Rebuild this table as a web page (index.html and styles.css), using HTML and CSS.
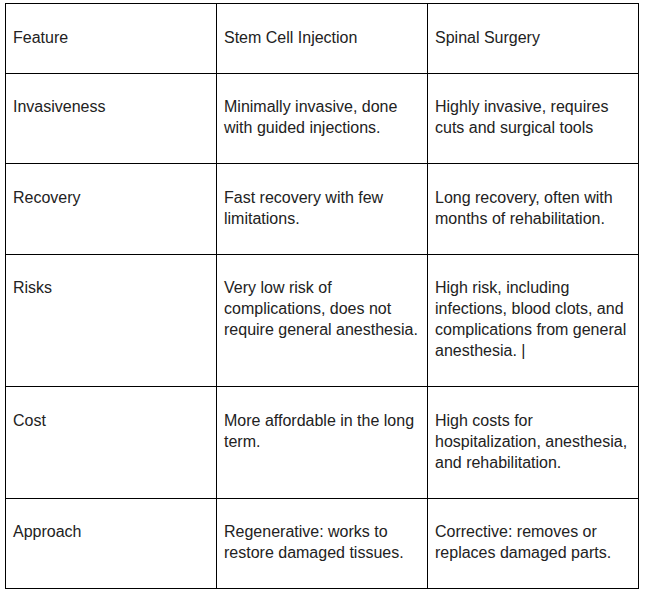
FILE: index.html
```html
<!DOCTYPE html>
<html>
<head>
<meta charset="utf-8">
<link rel="stylesheet" href="styles.css">
</head>
<body>
<table class="compare">
<colgroup><col class="c"><col class="c"><col class="c"></colgroup>
<tr><td>Feature</td><td>Stem Cell Injection</td><td>Spinal Surgery</td></tr>
<tr><td>Invasiveness</td><td>Minimally invasive, done with guided injections.</td><td>Highly invasive, requires cuts and surgical tools</td></tr>
<tr><td>Recovery</td><td>Fast recovery with few limitations.</td><td>Long recovery, often with months of rehabilitation.</td></tr>
<tr><td>Risks</td><td>Very low risk of complications, does not require general anesthesia.</td><td>High risk, including infections, blood clots, and complications from general anesthesia. |</td></tr>
<tr><td>Cost</td><td>More affordable in the long term.</td><td>High costs for hospitalization, anesthesia, and rehabilitation.</td></tr>
<tr><td>Approach</td><td>Regenerative: works to restore damaged tissues.</td><td>Corrective: removes or replaces damaged parts.</td></tr>
</table>
</body>
</html>
```
FILE: styles.css
```css
html, body {
  margin: 0;
  padding: 0;
  background: #ffffff;
}
body {
  padding: 3px 0 0 5px;
  font-family: "Liberation Sans", Arial, sans-serif;
  font-size: 16px;
  color: #222222;
}
.compare {
  border-collapse: collapse;
  table-layout: fixed;
  width: 634px;
}
.compare .c {
  width: 211px;
}
.compare td {
  border: 1px solid #000000;
  padding: 22.5px 6px 25px 7px;
  line-height: 21px;
  vertical-align: top;
  text-align: left;
}
```
